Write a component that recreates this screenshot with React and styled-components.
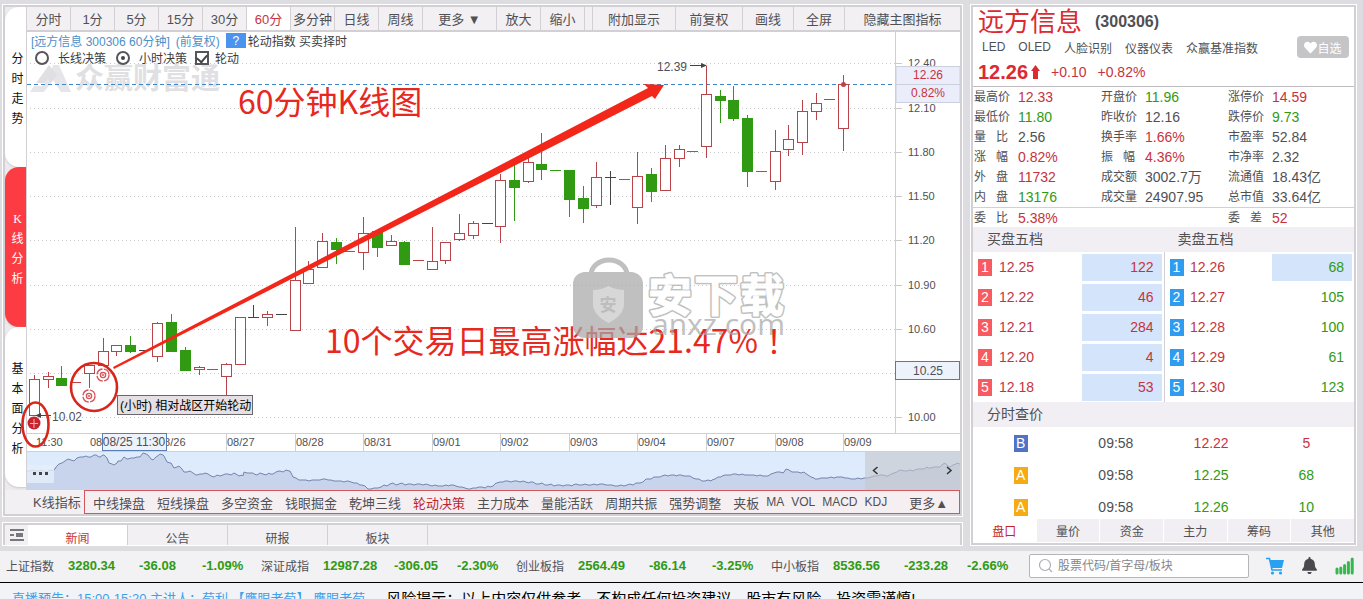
import { Fragment } from 'react';
import styled, { createGlobalStyle } from 'styled-components';
import { FaBell, FaHeart } from 'react-icons/fa';

const RED = '#c8323c';
const GREEN = '#2f9a12';
const GREY = '#505054';
const TONES = { up: RED, down: GREEN, flat: GREY };

const GlobalStyle = createGlobalStyle`
  * {
    box-sizing: border-box;
  }
  body {
    margin: 0;
    background: #f1f3f6;
    color: ${GREY};
    font-family: "Liberation Sans", "Noto Sans CJK SC", sans-serif;
    font-size: 12px;
  }
  button {
    font: inherit;
    color: inherit;
    border: 0;
    padding: 0;
    background: none;
    white-space: nowrap;
    cursor: pointer;
  }
  table {
    border-collapse: collapse;
    border-spacing: 0;
  }
`

const Page = styled.div`
  height: 100vh;
  min-width: 1200px;
  display: flex;
  flex-direction: column;
  overflow: hidden;
`
const Main = styled.main`
  display: flex;
  flex-shrink: 0;
  gap: 7px;
  padding: 4px 6px 5px 2px;
  background: #dddce1;
`
const LeftColumn = styled.div`
  flex: 1;
  min-width: 0;
  display: flex;
  flex-direction: column;
  gap: 5px;
`
const Panel = styled.section`
  border: 1px solid #fff;
  padding: 2px;
  background: #d2d0d5;
`
const Split = styled.div`
  display: flex;
`

/* side rail */
const Rail = styled.nav`
  width: 21px;
  display: flex;
  flex-direction: column;
  background: #eceaee;
`
const RailTab = styled.button`
  flex: 1;
  max-height: 160px;
  padding: 4px 0 0 4px;
  border-radius: 14px 0 0 14px;
  background: ${p => (p.$active ? '#fc3c42' : '#fff')};
  color: ${p => (p.$active ? '#fff' : '#111')};
  box-shadow: 0 1px 2px #c9c7cc;
  display: flex;
  flex-direction: column;
  align-items: center;
  justify-content: center;
  font-family: "Liberation Serif", "Noto Sans CJK SC", serif;
  line-height: 20px;
`

/* chart area */
const Stage = styled.div`
  flex: 1;
  min-width: 0;
  border-left: 1px solid #d2d0d5;
  background: #fff;
`
const Toolbar = styled.div`
  height: 25px;
  display: flex;
  border-bottom: 2px solid #d2d0d5;
  background: #f2f0f3;
  font-size: 13px;
`
const ToolButton = styled.button`
  width: ${p => p.$width || 44}px;
  flex: ${p => (p.$grow ? 1 : 'none')};
  border-right: ${p => (p.$grow ? 0 : 1)}px solid #d2d0d5;
  background: ${p => (p.$active ? '#fff' : 'none')};
  color: ${p => (p.$active ? RED : GREY)};
`
const ToolGap = styled.span`
  width: 8px;
  border-right: 1px solid #d2d0d5;
`
const ChartBox = styled.div`
  position: relative;
  svg {
    display: block;
    width: 100%;
    height: auto;
    overflow: visible;
  }
`
const Legend = styled.div`
  position: absolute;
  left: 4px;
  top: 0;
  color: #3c3c40;
`
const LegendRow = styled.div`
  display: flex;
  align-items: center;
  height: 17px;
`
const LegendTitle = styled.span`
  color: #4d8fc9;
  margin-right: 6px;
`
const HelpButton = styled.button`
  width: 20px;
  height: 15px;
  background: #4a94ee;
  color: #fff;
  margin-right: 2px;
`
const Choice = styled.label`
  display: flex;
  align-items: center;
  gap: ${p => p.$gap}px;
  margin-left: ${p => p.$left}px;
`
const Mark = styled.input`
  appearance: none;
  width: 14px;
  height: 14px;
  margin: 0;
  border: 2px solid #55555a;
  border-radius: ${p => (p.type === 'radio' ? '50%' : 0)};
  display: grid;
  place-items: center;
  &[type='radio']:checked::after {
    content: '';
    width: 4px;
    height: 4px;
    border-radius: 50%;
    background: #444;
  }
  &[type='checkbox']:checked::after {
    content: '';
    width: 8px;
    height: 5px;
    border: solid #444;
    border-width: 0 0 2px 2px;
    transform: rotate(-50deg);
  }
`
const IndicatorBar = styled.div`
  height: 24px;
  display: flex;
  background: #f2f0f3;
  font-size: 13px;
`
const IndicatorTitle = styled.span`
  width: 79px;
  padding-left: 28px;
  line-height: 25px;
  white-space: nowrap;
`
const IndicatorList = styled.div`
  flex: 1;
  display: flex;
  align-items: center;
  gap: 7px;
  padding: 0 11px 0 8px;
  border: 1px solid #d2565c;
  background: #f6eff2;
`
const IndicatorButton = styled.button`
  && {
    font-size: ${p => (p.$latin ? 12 : 13)}px;
  }
  margin-right: ${p => (p.$wide ? 5 : 0)}px;
  margin-left: ${p => (p.$last ? 'auto' : 0)};
  color: ${p => (p.$active ? '#c0242c' : GREY)};
`

/* news tabs */
const NewsPanel = styled(Panel)`
  height: 24px;
  padding: 2px 2px 0;
  display: flex;
`
const NewsBar = styled.div`
  flex: 1;
  display: flex;
  background: #f2f0f3;
`
const NewsMenu = styled.button`
  width: 23px;
  display: grid;
  place-items: center;
`
const NewsTab = styled.button`
  width: 100px;
  padding-top: 4px;
  border-right: 1px solid #d2d0d5;
  background: ${p => (p.$active ? '#fff' : 'none')};
  color: ${p => (p.$active ? RED : GREY)};
`

/* quote panel */
const QuotePanel = styled(Panel)`
  width: 387px;
  display: flex;
  flex-direction: column;
  & > * {
    background-color: #fff;
  }
`
const QuoteHead = styled.header`
  height: 80px;
  padding: 0 5px;
  border-bottom: 1px solid #bdbbc0;
`
const NameRow = styled.div`
  display: flex;
  align-items: center;
  gap: 13px;
  height: 29px;
  h1 {
    margin: 0;
    font-size: 26px;
    font-weight: 400;
    line-height: 28px;
    color: #dc2a30;
  }
  strong {
    font-size: 16px;
  }
`
const TagRow = styled.div`
  display: flex;
  align-items: center;
  gap: 13px;
  height: 22px;
  padding-left: 4px;
`
const FavButton = styled.button`
  margin-left: auto;
  width: 52px;
  height: 22px;
  border-radius: 4px;
  background: #c5c4c7;
  color: #fff;
  display: flex;
  align-items: center;
  justify-content: center;
`
const PriceRow = styled.div`
  display: flex;
  align-items: center;
  height: 28px;
  gap: 11px;
  font-size: 14px;
  color: ${RED};
`
const LastPrice = styled.strong`
  display: flex;
  align-items: center;
  gap: 3px;
  font-size: 20px;
  color: #dc2a30;
`
const Facts = styled.dl`
  margin: 0;
  display: grid;
  grid-template-columns: repeat(3, 45px 1fr);
  grid-auto-rows: 20px;
  line-height: 20px;
  dt {
    padding-left: 1px;
    white-space: pre;
  }
  dd {
    margin: 0;
    font-size: 14px;
    white-space: nowrap;
  }
`
const FactsFoot = styled(Facts)`
  border-top: 1px solid #d2d0d5;
  grid-auto-rows: 19px;
`
const Value = styled.dd`
  color: ${p => TONES[p.$tone]};
`
const Band = styled.div`
  height: 25px;
  display: grid;
  grid-template-columns: 1fr 1fr;
  font-size: 14px;
  line-height: 25px;
  &&& {
    background: #f1eff3;
  }
  span {
    padding-left: 14px;
  }
`
const Books = styled.div`
  display: grid;
  grid-template-columns: 1fr 1fr;
`
const BookTable = styled.table`
  width: 100%;
  height: 150px;
  font-size: 14px;
  border-left: ${p => (p.$divided ? 1 : 0)}px solid #d2d0d5;
  td, th {
    height: 30px;
    padding: 0;
    text-align: left;
    font-weight: 400;
  }
`
const Badge = styled.span`
  display: block;
  width: 14px;
  height: 17px;
  line-height: 17px;
  font-size: 14px;
  text-align: center;
  color: #fff;
  background: ${p => p.$color};
`
const Volume = styled.div`
  height: 27px;
  width: 80px;
  line-height: 27px;
  padding-right: 8px;
  text-align: right;
  background: ${p => (p.$filled ? '#d3e4fb' : 'none')};
`
const BadgeCell = styled.th`
  width: 26px;
  && {
    padding-left: 5px;
  }
`
const BookPrice = styled.td`
  color: ${RED};
`
const VolumeCell = styled.td`
  width: 82px;
  color: ${p => TONES[p.$tone]};
`
const Ticks = styled.div`
  flex: 1 1 0;
  min-height: 0;
  overflow: hidden;
`
const TickTable = styled.table`
  width: 100%;
  table-layout: fixed;
  font-size: 14px;
  td {
    height: 32px;
    padding: 0;
    text-align: center;
  }
  ${Badge} {
    margin: 0 auto;
  }
`
const TickCell = styled.td`
  color: ${p => TONES[p.$tone]};
`
const QuoteTabs = styled.nav`
  height: 24px;
  display: grid;
  grid-template-columns: repeat(6, 1fr);
  gap: 1px;
  padding-bottom: 1px;
`
const QuoteTab = styled.button`
  background: ${p => (p.$active ? '#fff' : '#f1eff3')};
  color: ${p => (p.$active ? '#c0242c' : GREY)};
`

/* bottom bars */
const IndexBar = styled.div`
  height: 32px;
  flex-shrink: 0;
  display: flex;
  align-items: center;
  padding: 0 9px 2px 6px;
  border-bottom: 1px solid #000;
  background: #f2f1f4;
`
const IndexItem = styled.div`
  display: grid;
  grid-template-columns: 62px 71px 63px 59px;
  align-items: center;
`
const IndexValue = styled.strong`
  font-size: 13px;
  color: ${GREEN};
`
const SearchBox = styled.label`
  flex: 1;
  margin-left: 3px;
  height: 24px;
  display: flex;
  align-items: center;
  gap: 5px;
  padding-left: 8px;
  border: 1px solid #b5b4b9;
  border-radius: 2px;
  background: #fff;
  input {
    flex: 1;
    min-width: 0;
    border: 0;
    outline: 0;
    padding: 0;
    font: inherit;
    background: none;
  }
  input::placeholder {
    color: #85858a;
    opacity: 1;
  }
`
const StatusIcons = styled.div`
  display: flex;
  align-items: center;
  gap: 17px;
  margin-left: 17px;
  button {
    display: flex;
  }
`
const Footer = styled.footer`
  flex: 1;
  display: flex;
  align-items: flex-start;
  gap: 21px;
  padding: 6px 12px 0;
  white-space: nowrap;
  font-size: 15px;
  line-height: 20px;
  color: #000;
  a {
    font-size: 13px;
    color: #3f9fe8;
    text-decoration: none;
  }
`

const PERIODS = ['分时', '1分', '5分', '15分', '30分', '60分', '多分钟', '日线', '周线'];
const INDICATORS = ['中线操盘', '短线操盘', '多空资金', '钱眼掘金', '乾坤三线', '轮动决策', '主力成本', '量能活跃', '周期共振', '强势调整', '夹板'];
const LATIN_INDICATORS = ['MA', 'VOL', 'MACD', 'KDJ'];

// kind, wick top, body top, body bottom, wick bottom
// r = rising, g = falling, R / G / K = flat bar in red, green or black
const CANDLES = [
  ['r', 375, 379, 415, 415], ['r', 372, 376, 379, 388], ['g', 366, 378, 385, 385],
  ['R', 382, 382, 382, 382], ['r', 365, 365, 373, 388], ['r', 338, 351, 365, 365],
  ['r', 345, 345, 351, 356], ['g', 336, 345, 351, 353], ['K', 350, 350, 350, 350],
  ['r', 322, 323, 356, 362], ['g', 314, 322, 351, 351], ['g', 347, 350, 370, 370],
  ['r', 366, 367, 369, 375], ['G', 369, 369, 369, 369], ['r', 363, 364, 376, 395],
  ['r', 317, 317, 364, 364], ['K', 305, 317, 317, 318], ['r', 311, 314, 317, 326],
  ['K', 314, 314, 314, 314], ['r', 227, 280, 330, 330], ['r', 261, 269, 283, 283],
  ['r', 233, 241, 267, 267], ['g', 238, 242, 249, 264], ['G', 251, 251, 251, 251],
  ['r', 217, 233, 252, 270], ['g', 231, 231, 247, 257], ['r', 235, 241, 245, 245],
  ['g', 241, 242, 264, 264], ['R', 260, 260, 260, 260], ['r', 227, 261, 269, 269],
  ['r', 242, 242, 260, 264], ['r', 214, 233, 239, 241], ['r', 221, 223, 235, 239],
  ['K', 223, 223, 223, 223], ['r', 174, 180, 226, 243], ['g', 165, 180, 187, 221],
  ['r', 158, 162, 181, 183], ['g', 133, 164, 169, 180], ['G', 170, 170, 170, 170],
  ['g', 170, 170, 199, 217], ['g', 186, 198, 208, 223], ['r', 162, 177, 205, 208],
  ['K', 171, 177, 177, 205], ['G', 179, 179, 179, 179], ['r', 152, 176, 207, 224],
  ['g', 168, 174, 191, 202], ['r', 145, 158, 190, 190], ['r', 145, 149, 158, 167],
  ['G', 151, 151, 151, 151], ['r', 66, 94, 146, 158], ['g', 90, 96, 100, 123],
  ['g', 86, 100, 118, 121], ['g', 115, 118, 171, 187], ['G', 171, 171, 171, 171],
  ['r', 130, 151, 181, 190], ['r', 125, 139, 149, 156], ['r', 100, 111, 142, 155],
  ['r', 93, 103, 111, 120], ['R', 99, 99, 99, 99], ['r', 75, 84, 128, 151],
];
const CANDLE_COLORS = { r: '#b8444a', g: GREEN, R: '#b8444a', G: GREEN, K: '#444' };

const PRICES = [
  [63, '12.40'], [108, '12.10'], [152, '11.80'], [196, '11.50'], [240, '11.20'],
  [285, '10.90'], [329, '10.60'], [373, ''], [417, '10.00'],
];
const DATES = [
  [157, '08/26'], [226, '08/27'], [295, '08/28'], [363, '08/31'], [432, '09/01'], [500, '09/02'],
  [569, '09/03'], [637, '09/04'], [706, '09/07'], [775, '09/08'], [843, '09/09'],
];

const TREND = [
  [27, 471], [52, 471], [56, 467], [62, 463], [68, 459], [74, 461], [80, 457], [88, 457], [96, 455],
  [100, 457], [104, 455], [107, 458], [109, 463], [114, 465], [118, 461], [121, 461], [124, 457],
  [128, 459], [134, 458], [140, 457], [143, 453], [148, 455], [153, 460], [160, 454], [164, 456],
  [167, 462], [171, 463], [174, 468], [179, 466], [184, 472], [190, 471], [197, 475], [205, 473],
  [214, 477], [225, 474], [236, 474], [243, 476], [244, 472], [254, 474], [270, 474], [280, 471],
  [290, 471], [293, 477], [300, 480], [317, 480], [325, 479], [335, 481], [348, 481], [362, 485],
  [368, 489], [378, 488], [390, 484], [420, 484], [440, 486], [450, 485], [470, 489], [479, 487],
  [490, 487], [497, 483], [505, 481], [530, 482], [548, 485], [573, 485], [600, 484], [618, 486],
  [640, 483], [648, 479], [662, 476], [678, 475], [690, 476], [702, 481], [712, 480], [722, 476],
  [733, 474], [748, 475], [768, 476], [774, 473], [784, 472], [786, 469], [795, 472], [805, 473],
  [815, 479], [825, 478], [842, 477], [852, 479], [865, 478], [880, 475], [888, 476], [898, 471],
  [915, 470], [928, 468], [940, 467], [945, 463], [950, 467], [957, 463], [960, 464],
];

// fills the gaps between the sampled points with small ticks
const trendPoints = () => {
  const out = [];
  TREND.forEach(([x, y], i) => {
    out.push(`${x},${y}`);
    const next = TREND[i + 1];
    if (!next) return;
    for (let px = x + 3; px < next[0]; px += 3) {
      const base = y + ((next[1] - y) * (px - x)) / (next[0] - x);
      out.push(`${px},${Math.round(base + Math.sin(px * 7) * 0.7)}`);
    }
  });
  return out.join(' ');
}

const FACTS = [
  ['最高价', '12.33', 'up'], ['开盘价', '11.96', 'down'], ['涨停价', '14.59', 'up'],
  ['最低价', '11.80', 'down'], ['昨收价', '12.16', 'flat'], ['跌停价', '9.73', 'down'],
  ['量   比', '2.56', 'flat'], ['换手率', '1.66%', 'up'], ['市盈率', '52.84', 'flat'],
  ['涨   幅', '0.82%', 'up'], ['振   幅', '4.36%', 'up'], ['市净率', '2.32', 'flat'],
  ['外   盘', '11732', 'up'], ['成交额', '3002.7万', 'flat'], ['流通值', '18.43亿', 'flat'],
  ['内   盘', '13176', 'down'], ['成交量', '24907.95', 'flat'], ['总市值', '33.64亿', 'flat'],
];
const FACTS_FOOT = [['委   比', '5.38%', 'up'], ['', '', 'flat'], ['委   差', '52', 'up']];
const BIDS = [['12.25', 122], ['12.22', 46], ['12.21', 284], ['12.20', 4], ['12.18', 53]];
const ASKS = [['12.26', 68], ['12.27', 105], ['12.28', 100], ['12.29', 61], ['12.30', 123]];
const TICKS = [
  ['B', '09:58', '12.22', 5, 'up'],
  ['A', '09:58', '12.25', 68, 'down'],
  ['A', '09:58', '12.26', 10, 'down'],
];
const INDEXES = [
  ['上证指数', '3280.34', '-36.08', '-1.09%'],
  ['深证成指', '12987.28', '-306.05', '-2.30%'],
  ['创业板指', '2564.49', '-86.14', '-3.25%'],
  ['中小板指', '8536.56', '-233.28', '-2.66%'],
];

const Candle = ({ index, data }) => {
  const [kind, high, top, bottom, low] = data;
  const x = Math.floor(34.45 + 13.715 * index) + 0.5;
  const color = CANDLE_COLORS[kind];
  if (top === bottom) {
    return (
      <g stroke={color}>
        <path d={`M${x - 5.5} ${top + 0.5}h11`} />
        {low > high && <path d={`M${x} ${high}V${low}`} />}
      </g>
    )
  }
  return (
    <g stroke={color} fill={kind === 'g' ? color : '#fff'}>
      <path d={`M${x} ${high}V${top}M${x} ${bottom}V${low}`} />
      <rect x={x - 5} y={top + 0.5} width="10" height={bottom - top} />
    </g>
  )
}

const Target = ({ x, y }) => (
  <g fill="none" stroke="#d8565c">
    <circle cx={x} cy={y} r="6" strokeWidth="1.4" strokeDasharray="8 1.5" />
    <circle cx={x} cy={y} r="2.6" strokeWidth="1.4" />
    <circle cx={x} cy={y} r="1" fill="#d8565c" stroke="none" />
  </g>
)

const KLineChart = () => (
  <svg viewBox="27 32 933 420" fontFamily='"Liberation Sans", "Noto Sans CJK SC", sans-serif' fill={GREY}>
    <g fill="#e0dfe3">
      <path d="M36 83L49 65L57 75L51 83L48 79L45 83Z" />
      <path d="M53 65H59L71 92H61L53 80L44 92H30L34 86H43L50 76Z" opacity="0.8" />
      <text x="75" y="89" fontSize="29" fontWeight="700">众赢财富通</text>
    </g>

    {PRICES.map(([y, label]) => (
      <g key={y}>
        <path d={`M30 ${y + 0.5}H895`} stroke="#c9c9cc" strokeDasharray="1 3" />
        <path d={`M896 ${y + 0.5}h6`} stroke="#c9c9cc" />
        <text x="908" y={y + 4} fontSize="11">{label}</text>
      </g>
    ))}
    <path d="M895.5 32V433M27 433.5H960M27 451.5H960" stroke="#cfcfd4" fill="none" />
    <path d="M27 84.5H895" stroke="#3f86c6" strokeDasharray="4 3" />

    <text x="36" y="446" fontSize="11">11:30</text>
    <text x="90" y="446" fontSize="11">08</text>
    {DATES.map(([x, label]) => (
      <g key={label}>
        <path d={`M${x + 0.5} 434V451`} stroke="#cfcfd4" />
        <text x={x + 1} y="446" fontSize="11">{label}</text>
      </g>
    ))}
    <rect x="102.5" y="433.5" width="64" height="17" fill="#edf2fb" stroke="#5a7eb4" />
    <text x="134" y="446" fontSize="12" textAnchor="middle">08/25 11:30</text>

    {CANDLES.map((data, i) => <Candle key={i} index={i} data={data} />)}
    <circle cx="843.5" cy="84.5" r="2.5" fill="#b8444a" />

    <text x="657" y="71" fontSize="12">12.39</text>
    <path d="M690 65.5H702" stroke="#444" />
    <path d="M701 63L707 65.5L701 68Z" fill="#444" />
    <text x="52" y="421" fontSize="12">10.02</text>
    <path d="M40 415.5H51" stroke="#444" />
    <path d="M41 413L35 415.5L41 418Z" fill="#444" />

    <rect x="896" y="66.5" width="64" height="36" fill="#ebeefa" stroke="#cbd0de" />
    <path d="M896 84.5H960" stroke="#cbd0de" />
    <g fontSize="12" textAnchor="middle">
      <text x="928" y="79" fill={RED}>12.26</text>
      <text x="928" y="97" fill={RED}>0.82%</text>
      <rect x="895.5" y="361.5" width="64" height="18" fill="#edf2fb" stroke="#5a7a9c" />
      <text x="928" y="375">10.25</text>
    </g>

    <g fill="#e8281e" fontSize="32" fontFamily='"Noto Sans CJK SC", sans-serif'>
      <text x="238" y="114">60分钟K线图</text>
      <text x="325" y="353">10个交易日最高涨幅达21.47%<tspan fontFamily='"Noto Sans CJK TC", sans-serif'>！</tspan></text>
    </g>
    <path d="M113 367L648 88L644 84L664 85L655 99L652 96L114 369Z" fill="#f3261a" />

    <Target x={103} y={375} />
    <Target x={89} y={396} />
    <circle cx="34" cy="423" r="6.5" fill="#c8242e" />
    <path d="M30 423.5H38M34 419V428" stroke="#f4b4b4" />
    <g fill="none" stroke="#d8261c" strokeWidth="2.6">
      <ellipse cx="94" cy="387" rx="23" ry="24" />
      <ellipse cx="35.5" cy="424.5" rx="13" ry="22" />
    </g>

    <rect x="117.5" y="395.5" width="135" height="19" fill="#e4e0e4" stroke="#6a686c" />
    <text x="120" y="410" fontSize="12" fill="#000">(小时) 相对战区开始轮动</text>

    <g opacity="0.72">
      <path d="M591 275A18 15 0 0 1 627 275" fill="none" stroke="#a8a8a8" strokeWidth="5" />
      <rect x="573" y="272" width="70" height="66" rx="12" fill="#a8a8a8" />
      <path d="M608.500 286Q616 290 624 290V304Q624 315 608.500 323Q593 315 593 304V290Q601 290 608.500 286Z" fill="#c9c9c9" />
      <text x="608" y="311" fontSize="17" fontWeight="700" textAnchor="middle" fill="#a4a4a4">安</text>
      <text x="652" y="335" fontSize="30" fontFamily='"Open Sans", sans-serif' fill="#a8a8a8">anxz.com</text>
      <g fontSize="44" fontWeight="700" strokeLinejoin="round">
        <text x="648 694 740" y="312" fill="#a8a8a8" stroke="#a8a8a8" strokeWidth="4">安下载</text>
        <text x="648 694 740" y="312" fill="#fff" stroke="#fff" strokeWidth="1">安下载</text>
      </g>
    </g>
  </svg>
)

const TrendStrip = () => {
  const points = trendPoints();
  return (
    <svg viewBox="27 452 933 38">
      <rect x="27" y="452" width="933" height="38" fill="#deebfd" />
      <polygon points={`27,490 ${points} 960,490`} fill="#c8d4ec" />
      <polyline points={points} fill="none" stroke="#7484ac" />
      <rect x="27" y="465" width="27" height="18" fill="#e6eefa" opacity="0.8" />
      <path d="M33 472h3v3h-3zM39 472h3v3h-3zM45 472h3v3h-3z" fill="#444" />
      <rect x="865" y="452" width="95" height="38" fill="#c4c6cc" opacity="0.6" />
      <path d="M877.500 467L873.500 470.500L877.500 474M947 467L951 470.500L947 474" fill="none" stroke="#333" strokeWidth="1.5" />
    </svg>
  )
}

const Book = ({ rows, color, tone, filled, divided, label }) => (
  <BookTable $divided={divided} aria-label={label}>
    <tbody>
      {rows.map(([price, volume], i) => (
        <tr key={price}>
          <BadgeCell scope="row"><Badge $color={color}>{i + 1}</Badge></BadgeCell>
          <BookPrice>{price}</BookPrice>
          <VolumeCell $tone={tone}><Volume $filled={i < filled}>{volume}</Volume></VolumeCell>
        </tr>
      ))}
    </tbody>
  </BookTable>
)

const FactItems = ({ items }) => items.map(([label, value, tone], i) => (
  <Fragment key={i}>
    <dt>{label}</dt>
    <Value $tone={tone}>{value}</Value>
  </Fragment>
))

const ChartPanel = () => (
  <Panel>
    <Split>
      <Rail>
        {['分时走势', 'K线分析', '基本面分析'].map((name, i) => (
          <RailTab key={name} $active={i === 1}>
            {name.split('').map(char => <span key={char}>{char}</span>)}
          </RailTab>
        ))}
      </Rail>
      <Stage>
        <Toolbar>
          {PERIODS.map(name => <ToolButton key={name} $active={name === '60分'}>{name}</ToolButton>)}
          <ToolButton $width={74}>更多 ▼</ToolButton>
          <ToolButton>放大</ToolButton>
          <ToolButton>缩小</ToolButton>
          <ToolGap />
          <ToolButton $width={83}>附加显示</ToolButton>
          <ToolButton $width={67}>前复权</ToolButton>
          <ToolButton $width={51}>画线</ToolButton>
          <ToolButton $width={51}>全屏</ToolButton>
          <ToolButton $grow>隐藏主图指标</ToolButton>
        </Toolbar>
        <ChartBox>
          <KLineChart />
          <Legend>
            <LegendRow>
              <LegendTitle>[远方信息 300306 60分钟]</LegendTitle>
              <LegendTitle>(前复权)</LegendTitle>
              <HelpButton>?</HelpButton>
              <span>轮动指数 买卖择时</span>
            </LegendRow>
            <LegendRow>
              <Choice $left={4} $gap={9}><Mark type="radio" name="plan" />长线决策</Choice>
              <Choice $left={10} $gap={9}><Mark type="radio" name="plan" defaultChecked />小时决策</Choice>
              <Choice $left={8} $gap={6}><Mark type="checkbox" defaultChecked />轮动</Choice>
            </LegendRow>
          </Legend>
        </ChartBox>
        <ChartBox>
          <TrendStrip />
        </ChartBox>
      </Stage>
    </Split>
    <IndicatorBar>
      <IndicatorTitle>K线指标</IndicatorTitle>
      <IndicatorList>
        {INDICATORS.map(name => (
          <IndicatorButton key={name} $wide={name.length === 4} $active={name === '轮动决策'}>{name}</IndicatorButton>
        ))}
        {LATIN_INDICATORS.map(name => <IndicatorButton key={name} $latin>{name}</IndicatorButton>)}
        <IndicatorButton $last>更多▲</IndicatorButton>
      </IndicatorList>
    </IndicatorBar>
  </Panel>
)

const NewsTabs = () => (
  <NewsPanel>
    <NewsBar>
      <NewsMenu aria-label="列表">
        <svg width="14" height="12" viewBox="0 0 14 12" fill="#77777e">
          <path d="M0 0h14v2H0zM0 5h4v2H0zM0 10h14v2H0zM6 4h7v4H6z" />
        </svg>
      </NewsMenu>
      {['新闻', '公告', '研报', '板块'].map((name, i) => <NewsTab key={name} $active={i === 0}>{name}</NewsTab>)}
    </NewsBar>
  </NewsPanel>
)

const Quote = () => (
  <QuotePanel>
    <QuoteHead>
      <NameRow>
        <h1>远方信息</h1>
        <strong>(300306)</strong>
      </NameRow>
      <TagRow>
        {['LED', 'OLED', '人脸识别', '仪器仪表', '众赢基准指数'].map(tag => <span key={tag}>{tag}</span>)}
        <FavButton><FaHeart size={13} />自选</FavButton>
      </TagRow>
      <PriceRow>
        <LastPrice>
          12.26
          <svg width="9" height="14" viewBox="0 0 9 14" fill="#dc2a30"><path d="M4.500 0L9 6H7V14H2V6H0Z" /></svg>
        </LastPrice>
        <span>+0.10</span>
        <span>+0.82%</span>
      </PriceRow>
    </QuoteHead>
    <Facts><FactItems items={FACTS} /></Facts>
    <FactsFoot><FactItems items={FACTS_FOOT} /></FactsFoot>
    <Band><span>买盘五档</span><span>卖盘五档</span></Band>
    <Books>
      <Book rows={BIDS} color="#f85a60" tone="up" filled={5} label="买盘五档" />
      <Book rows={ASKS} color="#2e9cf0" tone="down" filled={1} divided label="卖盘五档" />
    </Books>
    <Band><span>分时查价</span></Band>
    <Ticks>
      <TickTable>
        <tbody>
          {TICKS.map(([side, time, price, volume, tone]) => (
            <tr key={price}>
              <td><Badge $color={side === 'B' ? '#5074c4' : '#f5ac14'}>{side}</Badge></td>
              <td>{time}</td>
              <TickCell $tone={tone}>{price}</TickCell>
              <TickCell $tone={tone}>{volume}</TickCell>
            </tr>
          ))}
        </tbody>
      </TickTable>
    </Ticks>
    <QuoteTabs>
      {['盘口', '量价', '资金', '主力', '筹码', '其他'].map((name, i) => <QuoteTab key={name} $active={i === 0}>{name}</QuoteTab>)}
    </QuoteTabs>
  </QuotePanel>
)

const BottomBar = () => (
  <IndexBar>
    {INDEXES.map(([name, ...values]) => (
      <IndexItem key={name}>
        <span>{name}</span>
        {values.map(value => <IndexValue key={value}>{value}</IndexValue>)}
      </IndexItem>
    ))}
    <SearchBox>
      <svg width="15" height="15" viewBox="0 0 15 15" fill="none" stroke="#aeaeb3" strokeWidth="1.2">
        <circle cx="7" cy="7" r="5.500" />
        <path d="M11 11L14 14" />
      </svg>
      <input type="text" placeholder="股票代码/首字母/板块" aria-label="搜索" />
    </SearchBox>
    <StatusIcons>
      <button aria-label="购物车">
        <svg width="18" height="18" viewBox="0 0 18 18" fill="#2aa0f2">
          <path d="M4 3H18L16 11H6Z" />
          <path d="M0 1.500H3.500L6 13H16" fill="none" stroke="#2aa0f2" strokeWidth="1.600" />
          <circle cx="6.500" cy="16" r="1.600" />
          <circle cx="14.500" cy="16" r="1.600" />
        </svg>
      </button>
      <button aria-label="提醒"><FaBell size={17} color="#4a4a4e" /></button>
      <button aria-label="网络">
        <svg width="19" height="18" viewBox="0 0 19 18" stroke="#34b94a" strokeWidth="3" strokeLinecap="round">
          <path d="M2 16V12M5.800 16V11M9.600 16V8.500M13.400 16V5.500M17.200 16V2" />
        </svg>
      </button>
    </StatusIcons>
  </IndexBar>
)

const App = () => (
  <>
    <GlobalStyle />
    <Page>
      <Main>
        <LeftColumn>
          <ChartPanel />
          <NewsTabs />
        </LeftColumn>
        <Quote />
      </Main>
      <BottomBar />
      <Footer>
        <a href="#live">直播预告：15:00-15:20 主讲人：荀利 【鹰眼老荀】 鹰眼老荀</a>
        <span>风险提示：以上内容仅供参考，不构成任何投资建议，股市有风险，投资需谨慎!</span>
      </Footer>
    </Page>
  </>
)

export default App;
